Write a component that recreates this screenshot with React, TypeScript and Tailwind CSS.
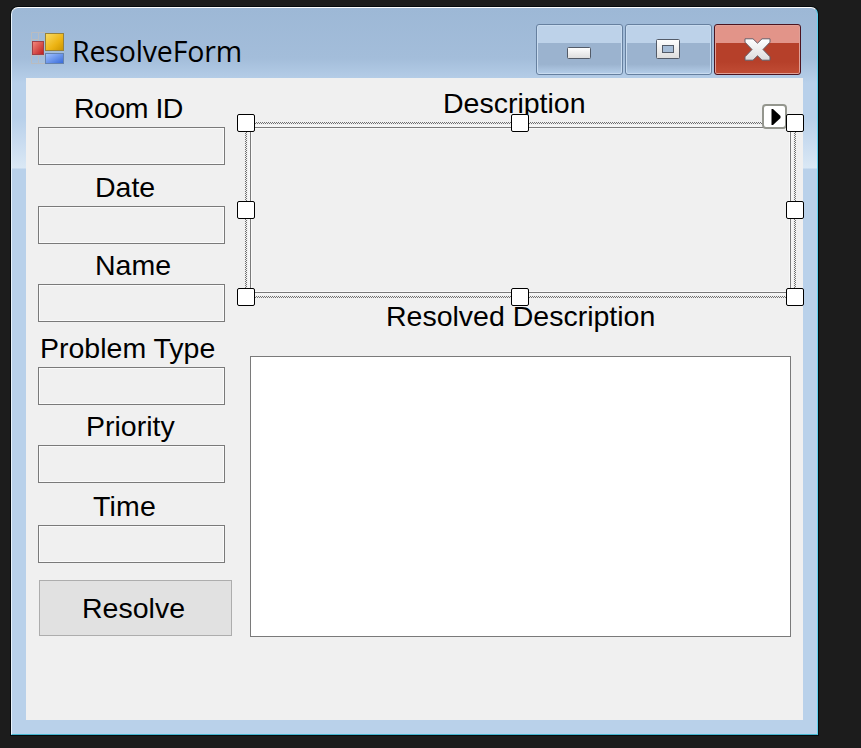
import React from "react";

const fields = [
  { label: "Room ID", pad: "pl-[36px] tracking-[-0.5px]", gap: "mb-[6px]" },
  { label: "Date", pad: "pl-[57px]", gap: "mb-[5px]" },
  { label: "Name", pad: "pl-[57px]", gap: "mb-[10px]" },
  { label: "Problem Type", pad: "pl-[2px]", gap: "mb-[5px]" },
  { label: "Priority", pad: "pl-[48px]", gap: "mb-[7px]" },
  { label: "Time", pad: "pl-[55px] tracking-[0.2px]", gap: "mb-[17px]" },
];

const handles = [
  "left-[-14px] top-[-14px]",
  "left-[260px] top-[-14px]",
  "left-[535px] top-[-14px]",
  "left-[-14px] top-[73px]",
  "left-[535px] top-[73px]",
  "left-[-14px] top-[160px]",
  "left-[260px] top-[160px]",
  "left-[535px] top-[160px]",
];

const dots =
  "absolute bg-[conic-gradient(#707070_25%,#f0f0f0_0_50%,#707070_0_75%,#f0f0f0_0)] bg-[length:2px_2px]";

function FormIcon() {
  return (
    <svg width="36" height="36" viewBox="0 0 36 36" className="block shrink-0">
      <defs>
        <linearGradient id="gold" x1="0" y1="0" x2="1" y2="1">
          <stop offset="0" stopColor="#f9dc67" />
          <stop offset=".6" stopColor="#edb414" />
          <stop offset="1" stopColor="#c99400" />
        </linearGradient>
        <linearGradient id="red" x1="0" y1="0" x2="1" y2="1">
          <stop offset="0" stopColor="#f58a80" />
          <stop offset="1" stopColor="#bd1c1c" />
        </linearGradient>
        <linearGradient id="blue" x1="0" y1="0" x2="1" y2="1">
          <stop offset="0" stopColor="#a3c4ff" />
          <stop offset="1" stopColor="#3568d8" />
        </linearGradient>
      </defs>
      <path d="M1.5 33.5v-31h14M8.5 2v32M1 9.5h7M1 25.5h14M1 33.5h14" fill="none" stroke="#b9bcc0" />
      <rect x="15.5" y="3.5" width="18" height="17" fill="url(#gold)" stroke="#98823a" />
      <rect x="2.5" y="11.5" width="11" height="13" fill="url(#red)" stroke="#a04048" />
      <rect x="15.5" y="23.5" width="18" height="10" fill="url(#blue)" stroke="#6683ad" />
    </svg>
  );
}

const captionButton =
  "flex h-[51px] w-[87px] items-center justify-center rounded-[3px] border border-[#66809f] bg-[linear-gradient(#bdd2e9_0_36%,#9bb3cf_37%_80%,#b5cee9)] shadow-[inset_0_0_0_1px_#c9dcf0]";

function CaptionButtons() {
  return (
    <div className="mt-[16px] mr-[16px] flex gap-[2px]">
      <button className={captionButton}>
        <svg width="24" height="12" viewBox="0 0 24 12" className="mt-[7px] mr-[1px]">
          <defs>
            <linearGradient id="glyph" x1="0" y1="0" x2="0" y2="1">
              <stop offset="0" stopColor="#fff" />
              <stop offset="1" stopColor="#dcdcdc" />
            </linearGradient>
          </defs>
          <rect x=".5" y=".5" width="23" height="11" rx="1" fill="url(#glyph)" stroke="#535b68" />
        </svg>
      </button>
      <button className={captionButton}>
        <svg width="24" height="20" viewBox="0 0 24 20" className="mt-[-1px] mr-[1px]">
          <rect x=".5" y=".5" width="23" height="19" rx="1" fill="url(#glyph)" stroke="#535b68" />
          <rect x="6.5" y="6.5" width="11" height="7" fill="#a5bcd6" stroke="#535b68" />
        </svg>
      </button>
      <button className="flex h-[51px] w-[87px] items-center justify-center rounded-[3px] border border-[#4c1420] bg-[linear-gradient(#e29489_0_36%,#b6402a_37%_75%,#c14d35)] shadow-[inset_0_0_0_1px_#e0a097]">
        <svg width="27" height="23" viewBox="0 0 27 23" className="mt-[-1px] mr-[1px]">
          <path
            d="M1 .8h8l4.5 4.4L18 .8h8v3.4l-7 7.3 7 7.3v3.4h-8l-4.5-4.4L9 22.2H1v-3.4l7-7.3-7-7.3z"
            fill="url(#glyph)"
            stroke="#655c66"
            strokeLinejoin="round"
          />
        </svg>
      </button>
    </div>
  );
}

function SelectedTextBox() {
  return (
    <div className="relative mt-[8px] h-[166px] w-[541px] border border-[#7a7a7a] bg-[#f0f0f0] shadow-[inset_0_0_0_1px_#f8f8f8,0_0_0_2px_#f5f5f5]">
      <div className={`${dots} top-[-6px] left-[-6px] h-[2px] w-[551px]`} />
      <div className={`${dots} top-[168px] left-[-6px] h-[2px] w-[551px]`} />
      <div className={`${dots} top-[-6px] left-[-6px] h-[176px] w-[2px]`} />
      <div className={`${dots} top-[-6px] left-[543px] h-[176px] w-[2px]`} />
      <div className="absolute top-[-24px] left-[511px] flex h-[25px] w-[25px] items-center justify-center rounded-[4px] border-2 border-[#94968e] bg-white">
        <svg width="10" height="16" viewBox="0 0 10 16" className="ml-[2px]">
          <path d="M.5 0H2L9.5 7v2L2 16H.5z" fill="#000" />
        </svg>
      </div>
      {handles.map((place) => (
        <div
          key={place}
          className={`absolute h-[18px] w-[18px] rounded-[2px] border border-black bg-white ${place}`}
        />
      ))}
    </div>
  );
}

export default function App() {
  return (
    <div className="h-[748px] w-[861px] overflow-hidden bg-[#1c1c1c] pt-[7px] pl-[11px] font-['Liberation_Sans',Arial,sans-serif] text-[28.5px] leading-[32px] text-black">
      <div className="flex h-[728px] w-[807px] flex-col rounded-t-[7px] border border-t-white border-r-[#5fd0ec] border-b-[#45b5cf] border-l-[#e9f3fb] bg-[linear-gradient(#9db8d6_0,#a3bdda_50px,#b8d0ea_75px,#b8d0ea_110px,#dae8f5_160px,#b9d1ea_161px)] shadow-[0_0_0_1px_#050a0d]">
        <header className="flex h-[70px] justify-between pl-[18px]">
          <div className="flex pt-[22px]">
            <FormIcon />
            <h1 className="mt-[2px] ml-[6px] font-['Open_Sans','Noto_Sans',sans-serif] text-[28.5px] leading-[38px] tracking-[-0.15px]">
              ResolveForm
            </h1>
          </div>
          <CaptionButtons />
        </header>
        <main className="ml-[14px] flex h-[642px] w-[777px] bg-[#f0f0f0] pl-[12px]">
          <section className="flex w-[212px] flex-col pt-[14px]">
            {fields.map(({ label, pad, gap }) => (
              <div key={label} className={gap}>
                <div className={`h-[35px] whitespace-nowrap ${pad}`}>{label}</div>
                <div className="h-[38px] w-[187px] border border-[#7a7a7a] shadow-[inset_0_0_0_1px_#fafafa]" />
              </div>
            ))}
            <button className="ml-px h-[56px] w-[193px] border border-[#adadad] bg-[#e1e1e1] pr-[4px]">
              Resolve
            </button>
          </section>
          <section className="pt-[9px]">
            <div className="pl-[193px]">Description</div>
            <SelectedTextBox />
            <div className="mt-[7px] pl-[136px]">Resolved Description</div>
            <div className="mt-[24px] h-[281px] w-[541px] border border-[#7a7a7a] bg-white" />
          </section>
        </main>
      </div>
    </div>
  );
}
